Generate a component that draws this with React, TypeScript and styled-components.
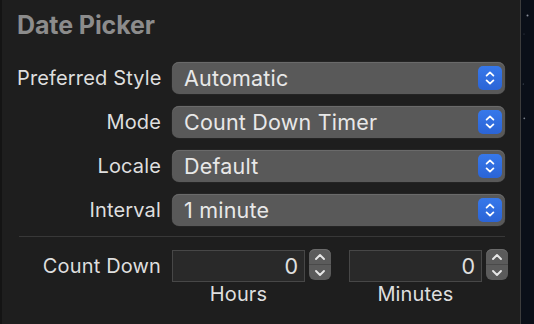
import React from "react";
import styled, { createGlobalStyle } from "styled-components";

const Global = createGlobalStyle`
  html, body { margin: 0; padding: 0; background: #1e1e1e; }
  body { font-family: Inter, "Noto Sans", sans-serif; -webkit-font-smoothing: antialiased; }
`;

const Page = styled.div`
  display: flex;
  width: 534px;
  height: 324px;
  overflow: hidden;
`;

const LeftEdge = styled.div`
  width: 2px;
  background: #141414;
`;

const Panel = styled.div`
  width: 518px;
  box-sizing: border-box;
  padding: 10px 15px 0 15px;
  background: #1e1e1e;
  display: flex;
  flex-direction: column;
`;

const EdgeLine = styled.div`
  width: 1px;
  background: #3c3c3c;
`;

const Space = styled.div`
  flex: 1;
  background: #0a0f18;
`;

const Title = styled.div`
  font-size: 25px;
  font-weight: 700;
  line-height: 30px;
  color: #8c8c8c;
  letter-spacing: -0.1px;
  margin-bottom: 22px;
`;

const Form = styled.div`
  display: grid;
  grid-template-columns: 144px 333px;
  column-gap: 11px;
  row-gap: 12px;
  align-items: center;
`;

const Label = styled.div`
  text-align: right;
  font-size: 20px;
  letter-spacing: 0.15px;
  line-height: 22px;
  color: #dedede;
  white-space: nowrap;
`;

const Popup = styled.div`
  height: 32px;
  box-sizing: border-box;
  border-radius: 7px;
  background: #595959;
  box-shadow: inset 0 1px 0 #6a6a6a, 0 0 0 0.5px #2a2a2a;
  display: flex;
  align-items: center;
  padding: 0 3px 0 12px;
`;

const PopupText = styled.span`
  flex: 1;
  font-size: 21.5px;
  letter-spacing: 0.2px;
  color: #e8e8e8;
  white-space: nowrap;
`;

const BlueButton = styled.div`
  width: 24px;
  height: 24px;
  border-radius: 5px;
  background: linear-gradient(#3778ea, #2b64d6);
  display: flex;
  align-items: center;
  justify-content: center;
`;

const Separator = styled.div`
  height: 1px;
  background: #383838;
  margin: 10px 0 13px 2px;
`;

const CountGrid = styled.div`
  display: grid;
  grid-template-columns: 144px 336px;
  column-gap: 11px;
  row-gap: 1px;
  align-items: center;
`;

const Fields = styled.div`
  display: grid;
  grid-template-columns: 1fr 1fr;
  column-gap: 18px;
`;

const FieldGroup = styled.div`
  display: flex;
  align-items: flex-start;
  gap: 4px;
`;

const NumberField = styled.div`
  flex: 1;
  height: 32px;
  box-sizing: border-box;
  background: #292929;
  border: 1px solid #474747;
  display: flex;
  align-items: center;
  justify-content: flex-end;
  padding-right: 6px;
  font-size: 21.5px;
  color: #e0e0e0;
`;

const Stepper = styled.div`
  width: 22px;
  height: 31px;
  margin-top: -1px;
  border-radius: 6px;
  background: #5b5b5b;
  box-shadow: inset 0 1px 0 #6b6b6b;
  display: flex;
  flex-direction: column;
  overflow: hidden;
`;

const StepHalf = styled.div<{ $top?: boolean }>`
  flex: 1;
  display: flex;
  align-items: center;
  justify-content: center;
  border-bottom: ${(p) => (p.$top ? "1px solid #4a4a4a" : "none")};
`;

const Caption = styled.div`
  text-align: center;
  font-size: 20px;
  letter-spacing: 0.15px;
  line-height: 22px;
  color: #dedede;
  margin-right: 26px;
`;

const Chevrons = () => (
  <svg width="12" height="18" viewBox="0 0 12 18">
    <path d="M2.6 6.6 L6 3.4 L9.4 6.6" fill="none" stroke="#fff" strokeWidth="1.8" strokeLinecap="round" strokeLinejoin="round" />
    <path d="M2.6 11.4 L6 14.6 L9.4 11.4" fill="none" stroke="#fff" strokeWidth="1.8" strokeLinecap="round" strokeLinejoin="round" />
  </svg>
);

const Chevron = ({ up }: { up?: boolean }) => (
  <svg width="12" height="8" viewBox="0 0 12 8">
    <path
      d={up ? "M2 6 L6 2 L10 6" : "M2 2 L6 6 L10 2"}
      fill="none"
      stroke="#e6e6e6"
      strokeWidth="1.9"
      strokeLinecap="round"
      strokeLinejoin="round"
    />
  </svg>
);

const Stars = () => (
  <svg width="13" height="324" viewBox="0 0 13 324">
    <circle cx="6.5" cy="15.5" r="1" fill="#8a8f99" />
    <circle cx="3" cy="34" r="0.5" fill="#4a505c" />
    <circle cx="2.3" cy="84" r="0.6" fill="#5a606c" />
    <circle cx="3.3" cy="118.3" r="0.9" fill="#7a808a" />
  </svg>
);

const rows: [string, string][] = [
  ["Preferred Style", "Automatic"],
  ["Mode", "Count Down Timer"],
  ["Locale", "Default"],
  ["Interval", "1 minute"],
];

export default function App() {
  return (
    <>
      <Global />
      <Page>
        <LeftEdge />
        <Panel>
          <Title>Date Picker</Title>
          <Form>
            {rows.map(([label, value]) => (
              <React.Fragment key={label}>
                <Label>{label}</Label>
                <Popup>
                  <PopupText>{value}</PopupText>
                  <BlueButton>
                    <Chevrons />
                  </BlueButton>
                </Popup>
              </React.Fragment>
            ))}
          </Form>
          <Separator />
          <CountGrid>
            <Label>Count Down</Label>
            <Fields>
              {["Hours", "Minutes"].map((n) => (
                <FieldGroup key={n}>
                  <NumberField>0</NumberField>
                  <Stepper>
                    <StepHalf $top>
                      <Chevron up />
                    </StepHalf>
                    <StepHalf>
                      <Chevron />
                    </StepHalf>
                  </Stepper>
                </FieldGroup>
              ))}
            </Fields>
            <div />
            <Fields>
              <Caption>Hours</Caption>
              <Caption>Minutes</Caption>
            </Fields>
          </CountGrid>
        </Panel>
        <EdgeLine />
        <Space>
          <Stars />
        </Space>
      </Page>
    </>
  );
}
